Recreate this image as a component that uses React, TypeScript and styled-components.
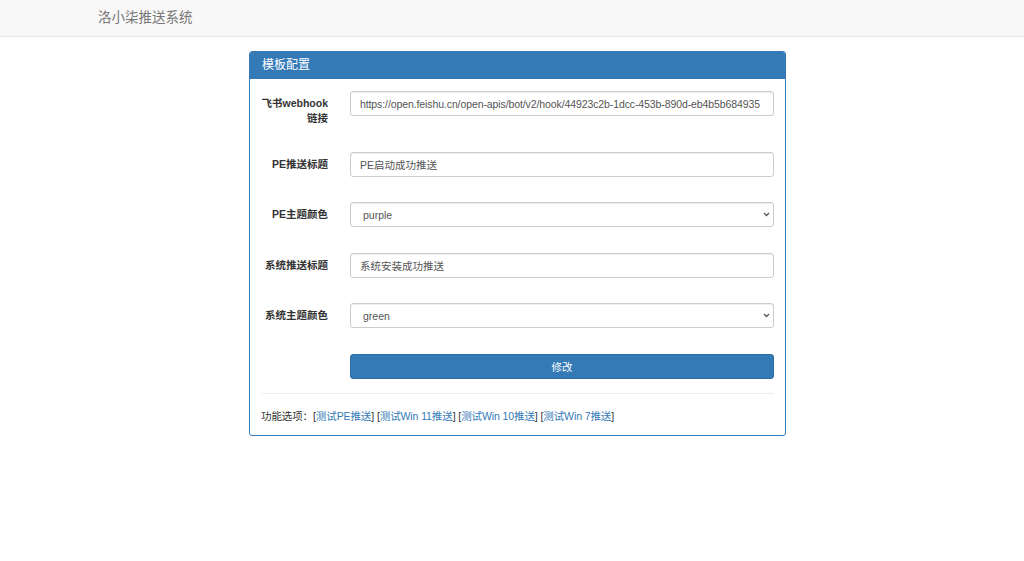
import { useState } from 'react';
import styled, { createGlobalStyle } from 'styled-components';

const GlobalStyle = createGlobalStyle`
    html, body {
        margin: 0;
        padding: 0;
        background: #fff;
    }
    body {
        font-family: 'Liberation Sans', Arial, 'Noto Sans CJK SC', sans-serif;
        font-size: 10.5px;
        line-height: 15px;
        color: #333;
    }
    * {
        box-sizing: border-box;
    }
`;

const Navbar = styled.div`
    height: 37px;
    background-color: #f8f8f8;
    border-bottom: 1px solid #e7e7e7;
    display: flex;
    align-items: center;
    padding-left: 98px;
`;

const Brand = styled.div`
    font-size: 13.5px;
    color: #777;
    line-height: 18px;
`;

const Main = styled.div`
    display: flex;
    justify-content: center;
    padding-top: 14px;
    padding-left: 11px;
`;

const Panel = styled.div`
    width: 537px;
    border: 1px solid #337ab7;
    border-radius: 3px;
    background: #fff;
`;

const PanelHeading = styled.div`
    background-color: #337ab7;
    color: #fff;
    height: 27px;
    padding: 0 12px;
    display: flex;
    align-items: center;
    font-size: 12px;
    border-top-left-radius: 2px;
    border-top-right-radius: 2px;
`;

const PanelBody = styled.div`
    padding: 12px 11px 11px;
`;

const FormGroup = styled.div<{ $last?: boolean }>`
    display: grid;
    grid-template-columns: 67px 1fr;
    column-gap: 22px;
    align-items: start;
    margin-bottom: ${props => (props.$last ? '0' : '25.5px')};
`;

const Label = styled.label`
    font-weight: bold;
    text-align: right;
    padding-top: 5px;
    line-height: 15px;
`;

const TextInput = styled.input<{ $tight?: boolean }>`
    width: 100%;
    height: 25px;
    padding: 4px 9px;
    font-family: inherit;
    font-size: 10.5px;
    letter-spacing: ${props => (props.$tight ? '-0.1px' : 'normal')};
    color: #555;
    background: #fff;
    border: 1px solid #ccc;
    border-radius: 3px;
    box-shadow: inset 0 1px 1px rgba(0, 0, 0, 0.075);
    outline: none;
`;

const SelectWrap = styled.div`
    position: relative;
    width: 100%;
`;

const Select = styled.select`
    appearance: none;
    -webkit-appearance: none;
    width: 100%;
    height: 25px;
    padding: 3px 20px 3px 12px;
    font-family: inherit;
    font-size: 10.5px;
    color: #555;
    background: #fff;
    border: 1px solid #ccc;
    border-radius: 3px;
    box-shadow: inset 0 1px 1px rgba(0, 0, 0, 0.075);
    outline: none;
`;

const Chevron = styled.svg`
    position: absolute;
    right: 4px;
    top: 10px;
    width: 7px;
    height: 5px;
    pointer-events: none;
`;

const SubmitButton = styled.button`
    width: 100%;
    height: 25px;
    border: 1px solid #2e6da4;
    border-radius: 3px;
    background-color: #337ab7;
    color: #fff;
    font-family: inherit;
    font-size: 10.5px;
    cursor: pointer;
`;

const Divider = styled.hr`
    border: 0;
    border-top: 1px solid #eee;
    margin: 14px 0 15px;
`;

const Footer = styled.div`
    line-height: 15px;
    letter-spacing: -0.1px;
`;

const FooterLink = styled.a`
    color: #337ab7;
    text-decoration: none;
`;

const tests = ['测试PE推送', '测试Win 11推送', '测试Win 10推送', '测试Win 7推送'];

const colors = ['blue', 'wathet', 'turquoise', 'green', 'yellow', 'orange', 'red', 'carmine', 'violet', 'purple', 'indigo', 'grey'];

const ColorSelect = ({ value, onChange }: { value: string; onChange: (v: string) => void }) => (
    <SelectWrap>
        <Select value={value} onChange={e => onChange(e.target.value)}>
            {colors.map(c => (
                <option key={c} value={c}>
                    {c}
                </option>
            ))}
        </Select>
        <Chevron viewBox="0 0 7 5">
            <path d="M1 1 L3.5 3.5 L6 1" fill="none" stroke="#555" strokeWidth="1.3" />
        </Chevron>
    </SelectWrap>
);

export default function App() {
    const [peColor, setPeColor] = useState('purple');
    const [sysColor, setSysColor] = useState('green');

    return (
        <>
            <GlobalStyle />
            <Navbar>
                <Brand>洛小柒推送系统</Brand>
            </Navbar>
            <Main>
                <Panel>
                    <PanelHeading>模板配置</PanelHeading>
                    <PanelBody>
                        <FormGroup>
                            <Label>飞书webhook链接</Label>
                            <TextInput
                                $tight
                                defaultValue="https://open.feishu.cn/open-apis/bot/v2/hook/44923c2b-1dcc-453b-890d-eb4b5b684935"
                            />
                        </FormGroup>
                        <FormGroup>
                            <Label>PE推送标题</Label>
                            <TextInput defaultValue="PE启动成功推送" />
                        </FormGroup>
                        <FormGroup>
                            <Label>PE主题颜色</Label>
                            <ColorSelect value={peColor} onChange={setPeColor} />
                        </FormGroup>
                        <FormGroup>
                            <Label>系统推送标题</Label>
                            <TextInput defaultValue="系统安装成功推送" />
                        </FormGroup>
                        <FormGroup>
                            <Label>系统主题颜色</Label>
                            <ColorSelect value={sysColor} onChange={setSysColor} />
                        </FormGroup>
                        <FormGroup $last>
                            <span />
                            <SubmitButton>修改</SubmitButton>
                        </FormGroup>
                        <Divider />
                        <Footer>
                            功能选项：
                            {tests.map((t, i) => (
                                <span key={t}>
                                    {i > 0 && ' '}[<FooterLink href="#">{t}</FooterLink>]
                                </span>
                            ))}
                        </Footer>
                    </PanelBody>
                </Panel>
            </Main>
        </>
    );
}
